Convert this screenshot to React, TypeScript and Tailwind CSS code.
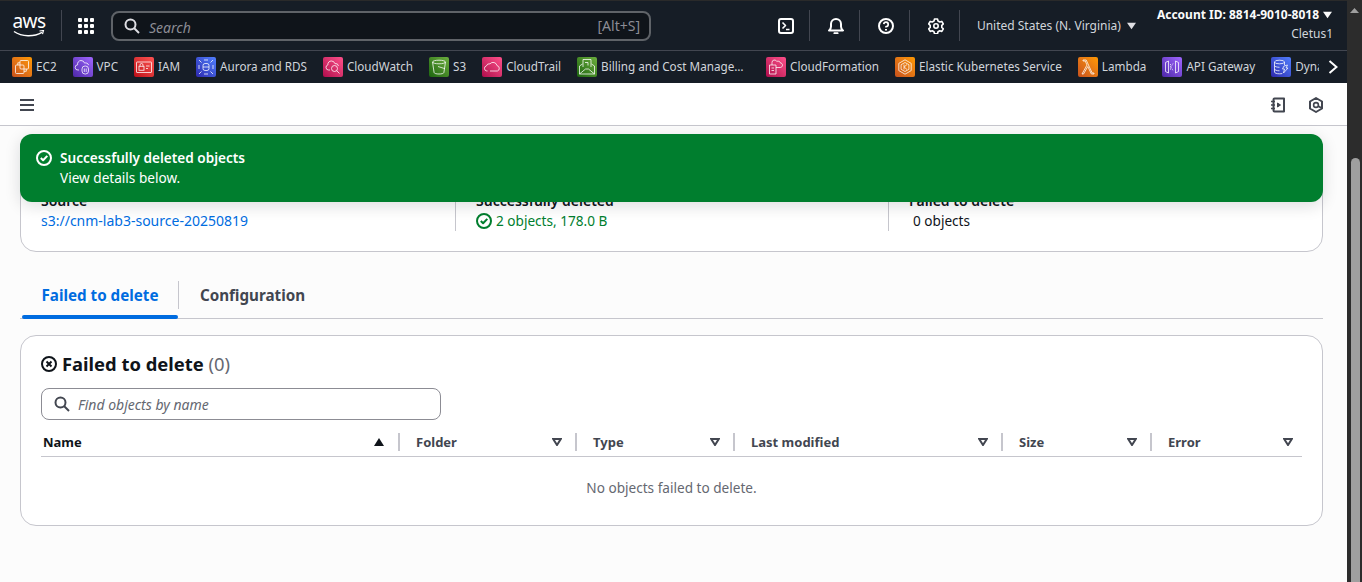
import type { ReactNode } from "react";

type Service = {
  name: string;
  tile: string;
  icon: ReactNode;
  truncate?: boolean;
};

const ORANGE = "bg-gradient-to-tr from-[#c8511b] to-[#ff9900]";
const PURPLE = "bg-gradient-to-tr from-[#4d27a8] to-[#a166ff]";
const RED = "bg-gradient-to-tr from-[#bd0816] to-[#ff5252]";
const BLUE = "bg-gradient-to-tr from-[#2e27ad] to-[#527fff]";
const PINK = "bg-gradient-to-tr from-[#b0084d] to-[#ff4f8b]";
const GREEN = "bg-gradient-to-tr from-[#1b660f] to-[#6cae3e]";

const services: Service[] = [
  {
    name: "EC2",
    tile: ORANGE,
    icon: (
      <>
        <rect x="8" y="3.5" width="8.5" height="8.5" rx="1" />
        <path d="M5.8 8V5.8H8M12 14.3h2.3V12" />
        <rect x="3.5" y="8" width="8.5" height="8.5" rx="1" />
      </>
    ),
  },
  {
    name: "VPC",
    tile: PURPLE,
    icon: (
      <>
        <path d="M6 13H5a2.6 2.6 0 0 1-.4-5.2A3.6 3.6 0 0 1 8 3.5a3.8 3.8 0 0 1 3.6 2.6 3 3 0 0 1 4 2" />
        <rect x="9" y="9" width="6.5" height="8" rx="3" />
        <path d="M11.3 11.5v3.5M13.2 11.5v3.5" />
      </>
    ),
  },
  {
    name: "IAM",
    tile: RED,
    icon: (
      <>
        <rect x="2.5" y="5" width="15" height="10.5" rx="0.5" />
        <rect x="5" y="9.3" width="5" height="4" />
        <path d="M6 9.3V8a1.5 1.5 0 0 1 3 0v1.3M12 9h3.5M12 11.5h2" />
      </>
    ),
  },
  {
    name: "Aurora and RDS",
    tile: BLUE,
    icon: (
      <>
        <rect x="7" y="6.5" width="6" height="7" rx="2" />
        <path d="M7 10h6M3 3l2.5 2.5M17 3l-2.5 2.5M3 17l2.5-2.5M17 17l-2.5-2.5M3 8v4M17 8v4M8 3h4M8 17h4" />
      </>
    ),
  },
  {
    name: "CloudWatch",
    tile: PINK,
    icon: (
      <>
        <path d="M7 13H5.5a2.6 2.6 0 0 1-.6-5.1A3.4 3.4 0 0 1 8.5 4a3.6 3.6 0 0 1 3.4 2.6 3 3 0 0 1 3.6 2.4" />
        <circle cx="11.5" cy="11.5" r="3" />
        <path d="M13.7 13.7l2.8 2.8" />
      </>
    ),
  },
  {
    name: "S3",
    tile: GREEN,
    icon: (
      <>
        <ellipse cx="10" cy="5" rx="6.5" ry="1.8" />
        <path d="M3.5 5l1.6 10.5c.2 1 2.3 1.5 4.9 1.5s4.7-.5 4.9-1.5L16.5 5" />
        <path d="M9 9.5l7 2.2" />
      </>
    ),
  },
  {
    name: "CloudTrail",
    tile: PINK,
    icon: (
      <>
        <path d="M5.5 14H4.8a2.6 2.6 0 0 1-.4-5.1 3.2 3.2 0 0 1 3.6-2.1A4 4 0 0 1 15 8.6a2.8 2.8 0 0 1 .4 5.4H8" />
      </>
    ),
  },
  {
    name: "Billing and Cost Management",
    tile: GREEN,
    truncate: true,
    icon: (
      <>
        <path d="M2.5 9v8h15V9l-3-2M5.5 7l-3 2M2.5 17l6-5h3l6 5" />
        <path d="M6 10V2.5h8V10M8 5.5h3v3" />
      </>
    ),
  },
  {
    name: "CloudFormation",
    tile: PINK,
    icon: (
      <>
        <path d="M3.5 8h6.5v9H3.5z" />
        <path d="M5.5 11h2.5M5.5 13.5h2.5M6 8V5.5a2.5 2.5 0 0 1 4.8-1 2.6 2.6 0 0 1 1.4-.3c1.3 0 2 .8 2.2 1.8 1.3 0 2.1 1 2.1 2.2s-1 2.3-2.3 2.3H10" />
      </>
    ),
  },
  {
    name: "Elastic Kubernetes Service",
    tile: ORANGE,
    icon: (
      <>
        <path d="M10 2.8l6.2 3.6v7.2L10 17.2l-6.2-3.6V6.4z" />
        <path d="M10 5.5l3.9 2.2v4.6L10 14.5l-3.9-2.2V7.7z" />
        <path d="M9 7.5v5M12 7.5L9.2 10l2.8 2.5" />
      </>
    ),
  },
  {
    name: "Lambda",
    tile: ORANGE,
    icon: <path d="M4 17l5-9-1.8-4H5V3h3.2l6 13H16v1h-2.6L9.8 9.5 5.5 17z" />,
  },
  {
    name: "API Gateway",
    tile: PURPLE,
    icon: (
      <>
        <path d="M3.5 5.5l3-1.5v12l-3-1.5zM16.5 5.5l-3-1.5v12l3-1.5z" />
        <path d="M11 6.5L9 10l2 3.5M8.5 7v6" strokeDasharray="1.2 1" />
      </>
    ),
  },
  {
    name: "DynamoDB",
    tile: BLUE,
    icon: (
      <>
        <ellipse cx="8.5" cy="5" rx="5" ry="1.8" />
        <path d="M3.5 5v10c0 1 2.2 1.8 5 1.8 1 0 2-.1 2.8-.3M3.5 8.5c0 1 2.2 1.8 5 1.8M3.5 12c0 1 2.2 1.8 5 1.8M13.5 5v3" />
        <path d="M13 9l3.5-1-1.5 3h2l-4.5 5 1-4h-2z" />
      </>
    ),
  },
];

const columns = [
  { name: "Name", width: "w-[359px]", pad: "pl-[2px]", sorted: true },
  { name: "Folder", width: "w-[177px]", pad: "pl-4" },
  { name: "Type", width: "w-[158px]", pad: "pl-4" },
  { name: "Last modified", width: "w-[268px]", pad: "pl-4" },
  { name: "Size", width: "w-[149px]", pad: "pl-4" },
  { name: "Error", width: "w-[150px]", pad: "pl-4", last: true },
];

function Icon16({ children, className = "" }: { children: ReactNode; className?: string }) {
  return (
    <svg
      viewBox="0 0 16 16"
      fill="none"
      stroke="currentColor"
      strokeWidth="2"
      strokeLinejoin="round"
      className={`h-4 w-4 shrink-0 ${className}`}
    >
      {children}
    </svg>
  );
}

function SearchGlyph({ className = "" }: { className?: string }) {
  return (
    <Icon16 className={className}>
      <circle cx="6.5" cy="6.5" r="5" />
      <path d="M10 10l5 5" />
    </Icon16>
  );
}

function CheckCircle({ className = "" }: { className?: string }) {
  return (
    <Icon16 className={className}>
      <circle cx="8" cy="8" r="7" />
      <path d="M4.8 8l2.3 2.3 4.2-4.4" />
    </Icon16>
  );
}

function NavDivider() {
  return <div className="h-[31px] w-px bg-[#424650]" />;
}

function NavIcon({ children }: { children: ReactNode }) {
  return <div className="flex w-[49px] justify-center pl-[3px] text-white">{children}</div>;
}

function Caret({ className = "" }: { className?: string }) {
  return (
    <svg viewBox="0 0 10 8" className={`h-2 w-[9px] shrink-0 fill-current ${className}`}>
      <path d="M0 .5h10L5 7.5z" />
    </svg>
  );
}

function TopNav() {
  return (
    <div className="flex h-[50px] items-center border-b border-[#424650] bg-[#161d26]">
      <div className="relative ml-[13px] flex h-[31px] w-[32px] flex-col items-center">
        <span className="text-[19px] leading-[22px] tracking-[-0.5px] text-white">aws</span>
        <svg viewBox="0 0 32 8" className="absolute top-[20px] left-0 h-2 w-[32px] text-white">
          <path d="M1 1.5c8 5.5 20 5.5 28 .8" fill="none" stroke="currentColor" strokeWidth="1.5" />
          <path d="M26.5 1l4-.5-1 3.6" fill="none" stroke="currentColor" strokeWidth="1.2" />
        </svg>
      </div>
      <div className="ml-[16px]">
        <NavDivider />
      </div>
      <div className="ml-[16px] grid grid-cols-3 gap-[2px]">
        {Array.from({ length: 9 }).map((_, i) => (
          <span key={i} className="h-[4px] w-[4px] rounded-[1px] bg-white" />
        ))}
      </div>
      <div className="ml-[17px] flex h-[30px] w-[540px] items-center rounded-lg border-2 border-[#5f6368] bg-[#0f141a] pr-[9px] pl-[11px]">
        <SearchGlyph className="text-[#dedee3]" />
        <span className="ml-[9px] pt-[3px] text-[14px] text-[#8c8c94] italic">Search</span>
        <span className="ml-auto text-[14px] text-[#8c8c94]">[Alt+S]</span>
      </div>
      <div className="ml-auto flex items-center">
        <NavIcon>
          <Icon16>
            <rect x="1" y="1" width="14" height="14" rx="2" />
            <path d="M4.5 4.5L7.5 7.5L4.5 10.5M8 11.5h3.5" strokeWidth="1.6" />
          </Icon16>
        </NavIcon>
        <NavDivider />
        <NavIcon>
          <Icon16>
            <path d="M1 12.5c1.5-1 2-2 2-4V6a5 5 0 0 1 10 0v2.5c0 2 .5 3 2 4z" />
            <path d="M6 14.5c.5 1 3.5 1 4 0" />
          </Icon16>
        </NavIcon>
        <NavDivider />
        <NavIcon>
          <Icon16>
            <circle cx="8" cy="8" r="7" />
            <path d="M5.8 6.2A2.2 2.2 0 1 1 8 8.6v1" strokeWidth="1.7" />
            <path d="M8 11v1.5" />
          </Icon16>
        </NavIcon>
        <NavDivider />
        <NavIcon>
          <Icon16>
            <path d="M6.5 1h3l.5 2 1.8 1 2-.6 1.5 2.6-1.5 1.4v2l1.5 1.4-1.5 2.6-2-.6-1.8 1-.5 2h-3l-.5-2-1.8-1-2 .6L.7 10.8l1.5-1.4v-2L.7 6l1.5-2.6 2 .6L6 3z" strokeWidth="1.6" />
            <circle cx="8" cy="8" r="2.2" strokeWidth="1.6" />
          </Icon16>
        </NavIcon>
        <NavDivider />
        <div className="ml-[17px] flex w-[180px] items-center gap-[6px] text-[12px] text-[#d1d5db]">
          <span>United States (N. Virginia)</span>
          <Caret className="text-[#dedee3]" />
        </div>
        <div className="mr-[14px] -mt-[2px] flex flex-col items-end">
          <div className="flex items-center gap-[4px] text-[12px] leading-[16px] font-bold text-[#fbfbfb]">
            <span>Account ID: 8814-9010-8018</span>
            <Caret className="mr-px" />
          </div>
          <span className="mt-[3px] text-[12px] leading-[16px] text-[#d1d5db]">Cletus1</span>
        </div>
      </div>
    </div>
  );
}

function ServiceBar() {
  return (
    <div className="relative flex h-[32px] items-center bg-[#161d26]">
      <div className="flex min-w-0 flex-1 items-center gap-4 overflow-hidden pl-3">
        {services.map((s) => (
          <div key={s.name} className="flex shrink-0 items-center gap-1">
            <span className={`flex h-5 w-5 items-center justify-center rounded-[2px] ${s.tile}`}>
              <svg viewBox="0 0 20 20" fill="none" stroke="#fff" strokeWidth="0.9" strokeOpacity="0.85" className="h-5 w-5">
                {s.icon}
              </svg>
            </span>
            <span className={`text-[11.7px] whitespace-nowrap text-[#d1d5db] ${s.truncate ? "max-w-[149px] truncate" : ""}`}>
              {s.name}
            </span>
          </div>
        ))}
      </div>
      <div className="flex h-full w-[28px] shrink-0 items-center justify-center bg-[#161d26] text-white">
        <svg viewBox="0 0 10 14" className="h-[14px] w-[10px]" fill="none" stroke="currentColor" strokeWidth="2">
          <path d="M1.5 1l7 6-7 6" />
        </svg>
      </div>
    </div>
  );
}

function Toolbar() {
  return (
    <div className="flex h-[43px] items-center border-b border-[#c6c6cd] bg-white pt-[2px] pr-[23px] pl-5 text-[#424650]">
      <div className="flex h-[12px] w-[14px] flex-col justify-between">
        <span className="h-[2px] bg-current" />
        <span className="h-[2px] bg-current" />
        <span className="h-[2px] bg-current" />
      </div>
      <Icon16 className="ml-auto">
        <path d="M3.5 2.5a1 1 0 0 1 1-1H14v13H4.5a1 1 0 0 1-1-1z" />
        <path d="M1 4.5h4M1 8h4M1 11.5h4" strokeWidth="1.6" />
        <path d="M7.5 6v4l3-2z" fill="currentColor" strokeWidth="1" />
      </Icon16>
      <Icon16 className="ml-[22px]">
        <path d="M8 1l6 3.5v7L8 15l-6-3.5v-7z" />
        <circle cx="8" cy="8" r="2.4" strokeWidth="1.6" />
        <path d="M10 9l3.5 2" />
      </Icon16>
    </div>
  );
}

function Flash() {
  return (
    <div className="absolute top-2 right-6 left-5 z-10 flex h-[68px] gap-2 rounded-xl bg-[#007e2e] px-4 pt-[14px] text-white shadow-[0_4px_16px_rgba(15,20,26,0.14)]">
      <CheckCircle className="mt-[2px]" />
      <div className="text-[13.6px] leading-5">
        <div className="font-semibold">Successfully deleted objects</div>
        <div>View details below.</div>
      </div>
    </div>
  );
}

function SummaryCard() {
  return (
    <div className="mt-4 grid grid-cols-[414px_433px_1fr] rounded-2xl border border-[#c6c6cd] bg-white px-5 pt-12 pb-5 text-[14px] leading-5 text-[#0f141a]">
      <div>
        <div className="font-semibold">Source</div>
        <div className="text-[#006ce0]">s3://cnm-lab3-source-20250819</div>
      </div>
      <div className="border-l border-[#c6c6cd] pl-5">
        <div className="font-semibold">Successfully deleted</div>
        <div className="flex items-center gap-1 text-[13.6px] text-[#007e2e]">
          <CheckCircle />
          2 objects, 178.0 B
        </div>
      </div>
      <div className="border-l border-[#c6c6cd] pl-5">
        <div className="font-semibold">Failed to delete</div>
        <div className="pl-1 text-[13.6px]">0 objects</div>
      </div>
    </div>
  );
}

function Tabs() {
  return (
    <div className="mt-[29px] flex h-[38px] items-start border-b border-[#c6c6cd]">
      <div className="relative ml-[2px] flex h-[38px] w-[156px] items-start justify-center pt-[3px]">
        <span className="text-[15.2px] leading-[22px] font-bold text-[#006ce0]">Failed to delete</span>
        <span className="absolute inset-x-0 bottom-0 h-[4px] rounded-t-[2px] rounded-b-[2px] bg-[#006ce0]" />
      </div>
      <div className="h-[28px] w-px bg-[#c6c6cd]" />
      <span className="ml-[21px] pt-[3px] text-[15.2px] leading-[22px] font-bold text-[#424650]">Configuration</span>
    </div>
  );
}

function FailedCard() {
  return (
    <div className="mt-4 h-[191px] rounded-2xl border border-[#c6c6cd] bg-white px-5 pt-[14px]">
      <div className="flex items-center gap-[5px] text-[18.4px] leading-7 font-bold text-[#0f141a]">
        <Icon16>
          <circle cx="8" cy="8" r="7" />
          <path d="M5.5 5.5l5 5M10.5 5.5l-5 5" />
        </Icon16>
        <span>
          Failed to delete <span className="font-normal text-[#656871]">(0)</span>
        </span>
      </div>
      <div className="mt-[10px] flex h-8 w-[400px] items-center rounded-lg border border-[#8c8c94] bg-white pl-3 text-[14px] text-[#656871] italic">
        <SearchGlyph className="text-[#424650]" />
        <span className="ml-2 pt-px">Find objects by name</span>
      </div>
      <div className="mt-[13px] flex h-[24px] w-[1261px] border-b border-[#c6c6cd]">
        {columns.map((c) => (
          <div key={c.name} className={`flex h-[18px] shrink-0 items-center ${c.width} ${c.pad} ${c.last ? "" : "border-r-2 border-[#c6c6cd]"}`}>
            <span className={`pt-[2px] text-[13px] font-bold ${c.sorted ? "text-[#0f141a]" : "text-[#424650]"}`}>{c.name}</span>
            {c.sorted ? (
              <svg viewBox="0 0 10 8" className="mr-[14px] ml-auto h-2 w-[10px] fill-[#0f141a]">
                <path d="M5 0l5 8H0z" />
              </svg>
            ) : (
              <svg viewBox="0 0 10 8" className={`ml-auto h-2 w-[10px] fill-none stroke-[#424650] stroke-2 ${c.last ? "mr-[9px]" : "mr-[13px]"}`}>
                <path d="M1.2 1h7.6L5 7z" />
              </svg>
            )}
          </div>
        ))}
      </div>
      <p className="mt-[21px] text-center text-[13.6px] leading-5 text-[#656871]">No objects failed to delete.</p>
    </div>
  );
}

function Scrollbar() {
  return (
    <div className="flex h-full w-[15px] shrink-0 flex-col items-center bg-[#2c2c2c]">
      <svg viewBox="0 0 9 5" className="mt-[8px] h-[5px] w-[9px] fill-[#9f9f9f]">
        <path d="M4.5 0L9 5H0z" />
      </svg>
      <div className="mt-[145px] ml-px w-[9px] flex-1 rounded-t-[5px] bg-[#9f9f9f]" />
    </div>
  );
}

export default function App() {
  return (
    <div className="flex h-[582px] w-[1362px] overflow-hidden bg-[#fcfcfc] font-['Noto_Sans',sans-serif]">
      <div className="flex min-w-0 flex-1 flex-col">
        <div className="h-px bg-[#2a2a2a]" />
        <TopNav />
        <ServiceBar />
        <Toolbar />
        <main className="relative pr-6 pl-5">
          <Flash />
          <SummaryCard />
          <Tabs />
          <FailedCard />
        </main>
      </div>
      <Scrollbar />
    </div>
  );
}
